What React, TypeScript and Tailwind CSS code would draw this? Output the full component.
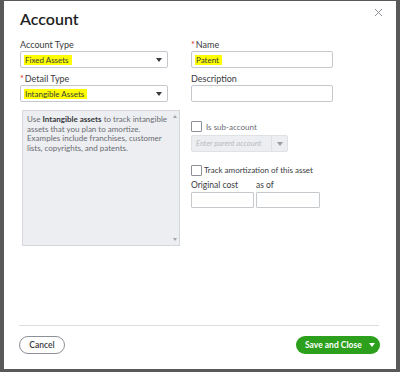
import React from "react";

const Caret = ({ color = "#393a3d" }: { color?: string }) => (
  <svg width="6" height="4" viewBox="0 0 6 4"><path d="M0 0h6L3 4z" fill={color} /></svg>
);

const Label = ({ children, req }: { children: React.ReactNode; req?: boolean }) => (
  <div className="h-[11px] text-[9px] leading-[11px] text-[#393a3d] flex items-center">
    {req && <span className="text-[#d52b1e] mr-[1px]">*</span>}
    {children}
  </div>
);

export default function App() {
  return (
    <div
      className="w-[400px] h-[372px] bg-[#595959] pt-[1px] pl-[4px] pr-[4px] overflow-hidden"
      style={{ fontFamily: "Lato, 'Open Sans', sans-serif" }}
    >
      <div className="w-[392px] h-[368px] bg-white flex flex-col px-[16px]">
        <div className="flex justify-between items-start">
          <div className="mt-[8px] h-[20px] text-[16px] leading-[20px] font-semibold text-[#1f1f1f]">Account</div>
          <svg className="mt-[7px] -mr-[3px]" width="9" height="9" viewBox="0 0 9 9">
            <path d="M1 1l7 7M8 1L1 8" stroke="#8d9096" strokeWidth="1" />
          </svg>
        </div>
        <div className="flex mt-[10px]">
          {/* left column */}
          <div className="w-[160px] flex flex-col">
            <Label>Account Type</Label>
            <div className="mt-[1px] w-[148px] h-[17px] border border-[#c5c8cc] rounded-[2px] flex items-center justify-between pl-[3px] pr-[5px]">
              <span className="text-[8px] leading-[10px] bg-[#ffff00] text-[#393a3d] px-[1px]">Fixed Assets&nbsp;</span>
              <Caret />
            </div>
            <div className="mt-[5px]">
              <Label req>Detail Type</Label>
            </div>
            <div className="mt-[1px] w-[148px] h-[17px] border border-[#c5c8cc] rounded-[2px] flex items-center justify-between pl-[3px] pr-[5px]">
              <span className="text-[8px] leading-[10px] bg-[#ffff00] text-[#393a3d] px-[1px]">Intangible Assets&nbsp;</span>
              <Caret />
            </div>
            <div className="mt-[8px] ml-[2px] w-[158px] h-[136px] bg-[#eceef1] border border-[#d4d7dc] flex">
              <div className="flex-1 pl-[4px] pt-[4px] text-[8px] leading-[9.6px] text-[#6b6c72] whitespace-nowrap">
                Use <b className="text-[#393a3d] font-bold">Intangible assets</b> to track intangible
                <br />
                assets that you plan to amortize.
                <br />
                Examples include franchises, customer
                <br />
                lists, copyrights, and patents.
              </div>
              <div className="w-[8px] flex flex-col items-center justify-between py-[4px]">
                <svg width="4" height="3" viewBox="0 0 4 3"><path d="M0 3h4L2 0z" fill="#a0a3a8" /></svg>
                <svg width="4" height="3" viewBox="0 0 4 3"><path d="M0 0h4L2 3z" fill="#a0a3a8" /></svg>
              </div>
            </div>
          </div>
          {/* right column */}
          <div className="ml-[11px] flex flex-col">
            <Label req>Name</Label>
            <div className="mt-[1px] w-[142px] h-[17px] border border-[#c5c8cc] rounded-[2px] flex items-center pl-[3px]">
              <span className="text-[8px] leading-[10px] bg-[#ffff00] text-[#393a3d] px-[1px]">Patent&nbsp;</span>
            </div>
            <div className="mt-[5px]">
              <Label>Description</Label>
            </div>
            <div className="mt-[1px] w-[142px] h-[17px] border border-[#c5c8cc] rounded-[2px]" />
            <div className="mt-[19px] flex items-center h-[11px]">
              <div className="w-[11px] h-[11px] border border-[#8d9096] rounded-[1px] bg-white" />
              <span className="ml-[4px] text-[8px] text-[#6b6c72] leading-[10px]">Is sub-account</span>
            </div>
            <div className="mt-[3px] w-[97px] h-[17px] bg-[#eceef1] border border-[#dfe1e4] rounded-[2px] flex">
              <div className="flex-1 flex items-center pl-[4px] text-[7.5px] italic text-[#b8bbc0]">Enter parent account</div>
              <div className="w-[16px] border-l border-[#dfe1e4] flex items-center justify-center">
                <Caret color="#9a9da2" />
              </div>
            </div>
            <div className="mt-[12px] flex items-center h-[12px]">
              <div className="w-[11px] h-[11px] border border-[#8d9096] rounded-[1px] bg-white" />
              <span className="ml-[2px] text-[8px] text-[#393a3d] leading-[10px]">Track amortization of this asset</span>
            </div>
            <div className="mt-[4px] flex text-[8.5px] leading-[11px] text-[#393a3d]">
              <span className="w-[65px]">Original cost</span>
              <span>as of</span>
            </div>
            <div className="mt-[1px] flex gap-[2px]">
              <div className="w-[63px] h-[16px] border border-[#c5c8cc] rounded-[1px]" />
              <div className="w-[64px] h-[16px] border border-[#c5c8cc] rounded-[1px]" />
            </div>
          </div>
        </div>
        <div className="flex-1" />
        <div className="h-px bg-[#dcdee1] w-[360px] -ml-[1px]" />
        <div className="mt-[10px] mb-[15px] flex justify-between items-center -ml-[1px] w-[361px]">
          <div className="w-[46px] h-[18px] border border-[#8d9096] rounded-full flex items-center justify-center text-[8.5px] text-[#393a3d] font-semibold">
            Cancel
          </div>
          <div className="w-[84px] h-[18px] bg-[#2ca01c] rounded-full flex items-center pl-[9px] pr-[5px] justify-between">
            <span className="text-[8.5px] text-white font-bold">Save and Close</span>
            <Caret color="#ffffff" />
          </div>
        </div>
      </div>
    </div>
  );
}
